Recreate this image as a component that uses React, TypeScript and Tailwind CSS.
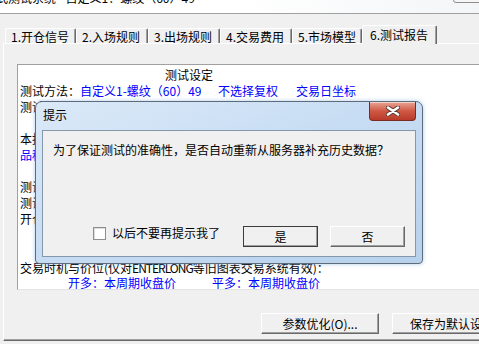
import React from "react";

const tabs = [
  { label: "1.开仓信号", w: "w-[71px]" },
  { label: "2.入场规则", w: "w-[72px]" },
  { label: "3.出场规则", w: "w-[72px]" },
  { label: "4.交易费用", w: "w-[72px]" },
  { label: "5.市场模型", w: "w-[70px]" },
];

function ClassicButton({ label, className = "" }: { label: string; className?: string }) {
  return (
    <div
      className={`shrink-0 flex items-center bg-[#f0f0f0] border border-t-white border-l-white border-r-[#696969] border-b-[#696969] shadow-[inset_-1px_-1px_0_#a0a0a0] ${className}`}
    >
      {label}
    </div>
  );
}

function CloseX() {
  return (
    <svg width="14" height="10" viewBox="0 0 14 10">
      <path d="M2 1.5 L12 8.5 M12 1.5 L2 8.5" stroke="#5a3a36" strokeWidth="4.4" strokeLinecap="round" />
      <path d="M2 1.5 L12 8.5 M12 1.5 L2 8.5" stroke="#ffffff" strokeWidth="2.6" strokeLinecap="round" />
    </svg>
  );
}

export default function App() {
  return (
    <div className="relative w-[479px] h-[344px] overflow-hidden bg-[#f0f0f0] text-[12px] leading-[16px] text-black font-['Noto_Sans_CJK_SC',sans-serif]">
      {/* window title strip, mostly scrolled off */}
      <div className="relative h-[14px] overflow-hidden bg-gradient-to-r from-white via-white to-[#f3f5f7] border-b border-[#a0a0a0]">
        <div className="mt-[-8px] ml-[-16px] whitespace-nowrap leading-[12px]">
          公式测试系统 - 自定义1：螺纹（60）49
        </div>
        <div className="absolute right-[-6px] top-[-8px] w-[32px] h-[11px] rounded-[3px] border border-[#8e8e8e] bg-[#f6f6f6]" />
      </div>

      {/* tab strip */}
      <div className="flex items-end h-[29px] pl-[5px]">
        {tabs.map((t) => (
          <div
            key={t.label}
            className={`${t.w} h-[15px] pl-[5px] leading-[15px] whitespace-nowrap rounded-t-[2px] border-t border-l border-t-white border-l-white border-r border-r-[#696969] shadow-[inset_-1px_0_0_#a0a0a0]`}
          >
            {t.label}
          </div>
        ))}
        <div className="relative z-10 w-[75px] h-[19px] mb-[-1px] pl-[7px] pt-[1px] leading-[15px] whitespace-nowrap bg-[#f0f0f0] rounded-t-[2px] border-t border-l border-t-white border-l-white border-r border-r-[#696969] shadow-[inset_-1px_0_0_#a0a0a0]">
          6.测试报告
        </div>
      </div>

      {/* tab page */}
      <div className="ml-[3px] w-[490px] h-[298px] border-t border-l border-t-white border-l-white border-b border-b-[#696969] shadow-[inset_0_-1px_0_#a0a0a0] pl-[13px] pt-[20px]">
        <div className="w-[470px] h-[226px] bg-white border-t border-l border-t-[#a0a0a0] border-l-[#a0a0a0] border-b border-b-[#e3e3e3] overflow-hidden pl-[2px] pt-[2px] whitespace-nowrap">
          <div className="h-[16px] pl-[145px]">测试设定</div>
          <div className="h-[16px] flex">
            <span className="w-[60px]">测试方法：</span>
            <span className="w-[138px] text-[#0000ff]">自定义1-螺纹（60）49</span>
            <span className="w-[78px] text-[#0000ff]">不选择复权</span>
            <span className="text-[#0000ff]">交易日坐标</span>
          </div>
          <div className="h-[16px]">测试周期：日线</div>
          <div className="h-[16px]" />
          <div className="h-[16px]">本报告仅供参考</div>
          <div className="h-[16px] text-[#0000ff]">品种：螺纹钢连续</div>
          <div className="h-[16px]" />
          <div className="h-[16px]">测试起始时间：</div>
          <div className="h-[16px]">测试结束时间：</div>
          <div className="h-[16px]">开仓方式：</div>
          <div className="h-[16px]" />
          <div className="h-[16px]" />
          <div className="h-[16px] pt-[1px]">
            交易时机与价位(仅对<span className="tracking-[-1px]">ENTERLONG</span>等旧图表交易系统有效)：
          </div>
          <div className="h-[16px] flex pl-[48px] text-[#0000ff]">
            <span className="w-[144px]">开多：本周期收盘价</span>
            <span>平多：本周期收盘价</span>
          </div>
        </div>

        <div className="flex gap-[13px] mt-[23px] ml-[244px]">
          <ClassicButton label="参数优化(O)..." className="w-[118px] h-[21px] justify-center" />
          <ClassicButton label="保存为默认设置(S)" className="w-[140px] h-[21px] pl-[17px] whitespace-nowrap" />
        </div>
      </div>

      {/* prompt dialog */}
      <div className="absolute left-[35px] top-[101px] w-[388px] h-[163px] flex flex-col px-[6px] pb-[6px] rounded-t-[7px] rounded-b-[4px] border border-[#5d6b7a] bg-gradient-to-br from-[#dbe9f8] via-[#c6dcf3] to-[#b7d1ec] shadow-[0_0_4px_rgba(120,170,220,0.6)]">
        <div className="relative h-[28px] shrink-0">
          <div className="pl-[1px] pt-[5px]">提示</div>
          <div className="absolute right-[0px] top-[0px] w-[47px] h-[19px] flex items-center justify-center rounded-b-[4px] border border-t-0 border-[#7a2c22] bg-gradient-to-b from-[#e8a596] via-[#cf5844] to-[#b9392a] shadow-[inset_0_1px_0_rgba(255,255,255,0.5)]">
            <CloseX />
          </div>
        </div>
        <div className="flex-1 flex flex-col bg-[#f0f0f0] border border-[#8497ab] pt-[11px] pl-[10px]">
          <div className="h-[16px] whitespace-nowrap">为了保证测试的准确性，是否自动重新从服务器补充历史数据？</div>
          <div className="flex items-start mt-[68px] ml-[-10px]">
            <div className="w-[200px] flex items-start pl-[50px]">
              <div className="mt-[1px] w-[13px] h-[13px] bg-white border border-[#8f8f8f] shadow-[inset_1px_1px_0_#dcdcdc]" />
              <span className="ml-[6px] mt-[-1px] whitespace-nowrap">以后不要再提示我了</span>
            </div>
            <div className="flex gap-[12px]">
              <ClassicButton label="是" className="w-[75px] h-[21px] justify-center outline outline-1 outline-[#3c3c3c] outline-offset-[-1px] border-[#3c3c3c] border-t-white border-l-white" />
              <ClassicButton label="否" className="w-[75px] h-[21px] justify-center" />
            </div>
          </div>
        </div>
      </div>
    </div>
  );
}
